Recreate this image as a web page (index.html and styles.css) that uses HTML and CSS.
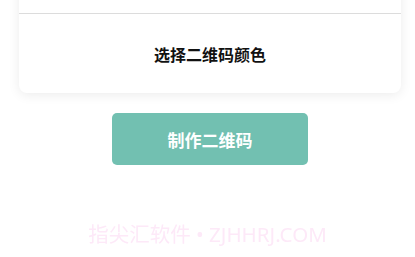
FILE: index.html
```html
<!DOCTYPE html>
<html lang="zh-CN">
<head>
<meta charset="utf-8">
<title>制作二维码</title>
<link rel="stylesheet" href="styles.css">
</head>
<body>
<main class="page">
  <section class="card">
    <div class="card-top"></div>
    <div class="card-row">选择二维码颜色</div>
  </section>
  <div class="actions">
    <button class="make-btn" type="button">制作二维码</button>
  </div>
</main>
<div class="watermark">指尖汇软件 • ZJHHRJ.COM</div>
</body>
</html>
```

FILE: styles.css
```css
html, body {
  margin: 0;
  padding: 0;
  background: #ffffff;
  font-family: "Noto Sans CJK SC", "Noto Sans", sans-serif;
  overflow: hidden;
  height: 257px;
}

.page {
  padding: 0 14px 0 19px;
}

.card {
  margin-top: -20px;
  background: #ffffff;
  border-radius: 8px;
  box-shadow: 0 2px 12px rgba(0, 0, 0, 0.08);
}

.card-top {
  height: 33px;
  border-bottom: 1px solid #dcdcdc;
}

.card-row {
  height: 79px;
  display: flex;
  align-items: center;
  justify-content: center;
  font-size: 16px;
  font-weight: 700;
  color: #111111;
}

.actions {
  display: flex;
  justify-content: center;
  margin-top: 20px;
}

.make-btn {
  width: 196px;
  height: 52px;
  border: none;
  border-radius: 5px;
  background: #72c0b1;
  color: #ffffff;
  font-family: "Noto Sans CJK SC", "Noto Sans", sans-serif;
  font-size: 17px;
  font-weight: 700;
  padding: 0;
}

.watermark {
  position: fixed;
  left: 0;
  right: 0;
  top: 220px;
  text-align: center;
  font-family: "Noto Sans", "Noto Sans CJK SC", sans-serif;
  font-size: 20.5px;
  line-height: 28px;
  color: #fde9f8;
  pointer-events: none;
}
```
